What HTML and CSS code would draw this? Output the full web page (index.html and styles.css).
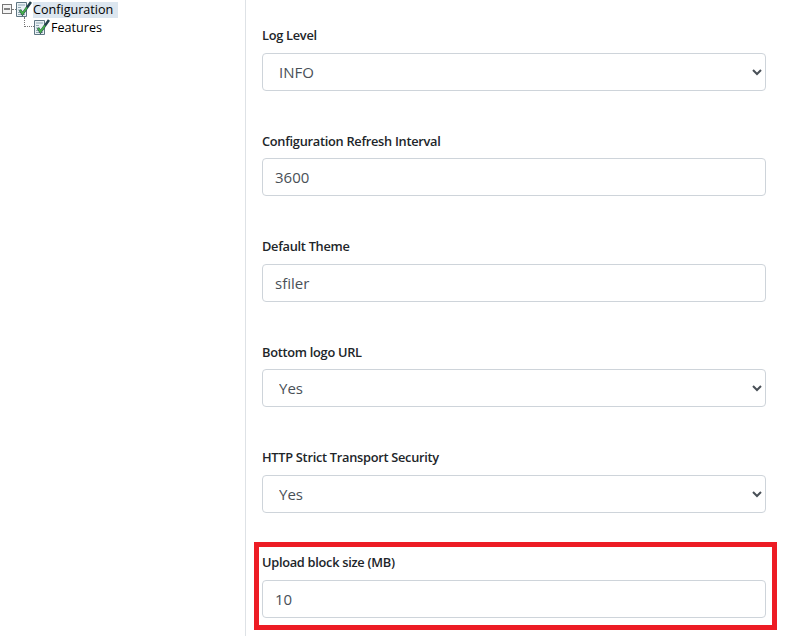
FILE: index.html
```html
<!DOCTYPE html>
<html lang="en">
<head>
    <meta charset="UTF-8">
    <title>Configuration</title>
    <link rel="stylesheet" href="styles.css">
</head>

<body>
    <div class="page">
        <!-- Tree -->
        <div class="sidebar">
            <div class="tree-row">
                <svg class="expander" width="10" height="10" viewBox="0 0 10 10">
                    <rect x="0.5" y="0.5" width="9" height="9" fill="#f4f4f4" stroke="#777"/>
                    <path d="M2 5h6" stroke="#111"/>
                </svg>
                <span class="dots-h"></span>
                <svg class="check-icon" width="16" height="16" viewBox="0 0 16 16">
                    <path d="M0.5 1.5h10v14h-10z" fill="#eaf1f4" stroke="#5f7683"/>
                    <path d="M2 4h7M2 6.5h3M2 9h3M2 11.5h2M2 13.5h7" stroke="#8fa6b3"/>
                    <path d="M4 9l2.5 4L15 1" fill="none" stroke="#23404a" stroke-width="2.6"/>
                    <path d="M4.2 9.2l2.3 3.4L11 6.5" fill="none" stroke="#46b04a" stroke-width="1.8"/>
                </svg>
                <span class="tree-label selected">Configuration</span>
            </div>
            <div class="tree-row child">
                <span class="dots-l"></span>
                <svg class="check-icon" width="16" height="16" viewBox="0 0 16 16">
                    <path d="M0.5 1.5h10v14h-10z" fill="#eaf1f4" stroke="#5f7683"/>
                    <path d="M2 4h7M2 6.5h3M2 9h3M2 11.5h2M2 13.5h7" stroke="#8fa6b3"/>
                    <path d="M4 9l2.5 4L15 1" fill="none" stroke="#23404a" stroke-width="2.6"/>
                    <path d="M4.2 9.2l2.3 3.4L11 6.5" fill="none" stroke="#46b04a" stroke-width="1.8"/>
                </svg>
                <span class="tree-label">Features</span>
            </div>
        </div>

        <!-- Settings form -->
        <div class="settings">
            <div class="field">
                <label>Log Level</label>
                <select class="control">
                    <option>INFO</option>
                </select>
            </div>
            <div class="field">
                <label>Configuration Refresh Interval</label>
                <input class="control" type="text" value="3600">
            </div>
            <div class="field">
                <label>Default Theme</label>
                <input class="control" type="text" value="sfiler">
            </div>
            <div class="field">
                <label>Bottom logo URL</label>
                <select class="control">
                    <option>Yes</option>
                </select>
            </div>
            <div class="field">
                <label>HTTP Strict Transport Security</label>
                <select class="control">
                    <option>Yes</option>
                </select>
            </div>
            <div class="field highlighted">
                <label>Upload block size (MB)</label>
                <input class="control" type="text" value="10">
            </div>
        </div>
    </div>
</body>
</html>
```

FILE: styles.css
```css
/* ====== Base Styles ====== */
* {
    box-sizing: border-box;
    margin: 0;
    padding: 0;
}

body {
    font-family: "Open Sans", "Noto Sans", Arial, sans-serif;
    color: #212529;
    background-color: #fff;
    overflow: hidden;
}

.page {
    display: flex;
    height: 636px;
}

/* ====== Tree ====== */
.sidebar {
    width: 246px;
    flex-shrink: 0;
    border-right: 1px solid #dee2e6;
    padding-left: 2px;
}

.tree-row {
    display: flex;
    align-items: center;
    height: 18px;
    font-size: 12.6px;
    color: #000;
}

.tree-row.child {
    padding-left: 22px;
}

.expander {
    flex-shrink: 0;
}

.dots-h {
    width: 4px;
    border-top: 1px dotted #777;
}

.dots-l {
    width: 10px;
    height: 10px;
    margin-top: -10px;
    border-left: 1px dotted #777;
    border-bottom: 1px dotted #777;
}

.check-icon {
    flex-shrink: 0;
}

.tree-label {
    margin: 2px 0 0 1px;
    padding: 0 5px 0 0;
    line-height: 16px;
}

.tree-label.selected {
    background-color: #dce6ef;
}

/* ====== Settings Form ====== */
.settings {
    flex: 1;
    padding: 25px 23px 0 16px;
}

.field {
    position: relative;
    margin-bottom: 39.42px;
}

.field label {
    display: block;
    font-size: 12.8px;
    font-weight: 600;
    letter-spacing: -0.28px;
    line-height: 20px;
    padding-top: 0.45px;
    margin-bottom: 7.55px;
}

.control {
    display: block;
    width: 100%;
    height: 38px;
    font-family: inherit;
    font-size: 15px;
    color: #495057;
    background-color: #fff;
    border: 1px solid #ced4da;
    border-radius: 4px;
    padding: 6px 12px;
}

/* red annotation around the last field */
.highlighted::after {
    content: '';
    position: absolute;
    top: -10px;
    left: -8px;
    right: -11px;
    bottom: -12px;
    border: 5px solid #ed1c24;
    pointer-events: none;
}
```
